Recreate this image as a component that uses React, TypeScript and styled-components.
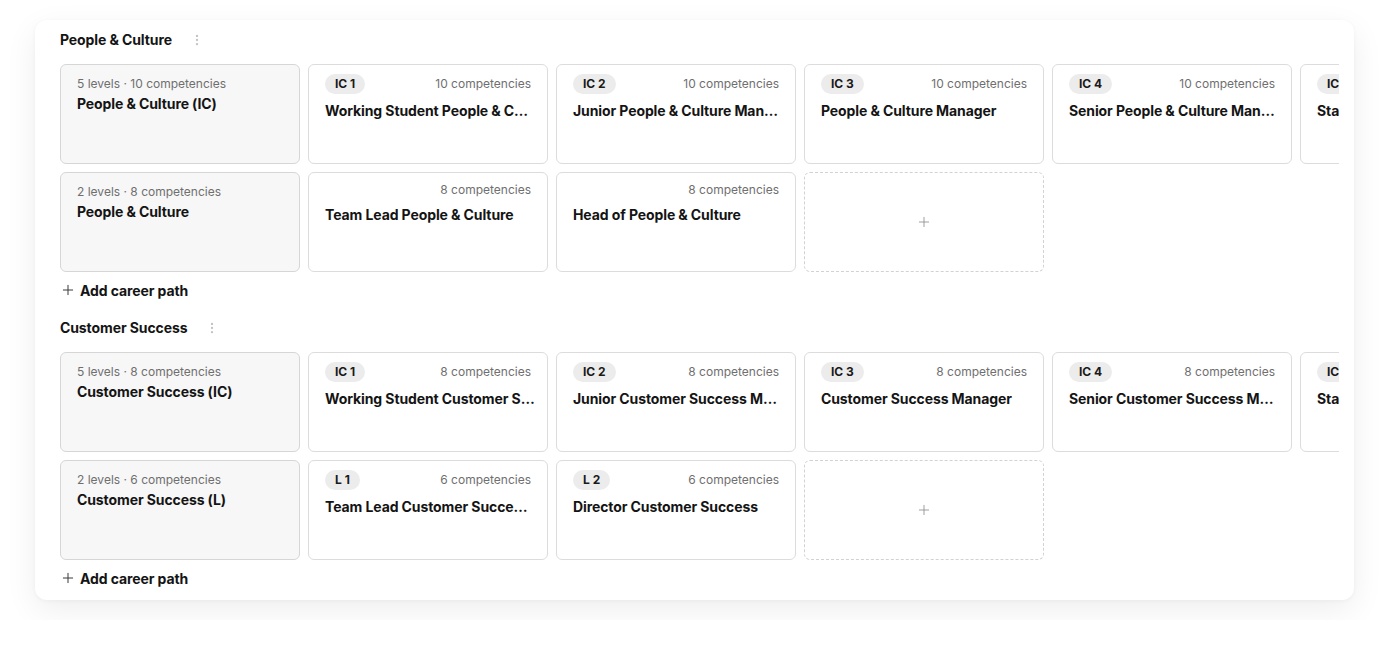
import React from 'react';
import styled, { createGlobalStyle } from 'styled-components';
import { EllipsisVertical, Plus } from 'lucide-react';

const GlobalStyle = createGlobalStyle`
  html, body { margin: 0; padding: 0; background: #fff; }
  body {
    font-family: Inter, "Noto Sans", sans-serif;
    color: #161616;
    -webkit-font-smoothing: antialiased;
  }
  * { box-sizing: border-box; }
`;

const Panel = styled.div`
  margin: 20px 35px;
  background: #fff;
  border-radius: 12px;
  box-shadow: 0 10px 32px rgba(0, 0, 0, 0.07), 0 1px 4px rgba(0, 0, 0, 0.04);
  padding: 0 15px 4px 25px;
`;

const Section = styled.section`
  display: flex;
  flex-direction: column;
`;

const SectionHeader = styled.div`
  height: 40px;
  display: flex;
  align-items: center;
`;

const SectionTitle = styled.h2`
  margin: 0;
  font-size: 14px;
  line-height: 20px;
  font-weight: 700;
  letter-spacing: -0.1px;
  color: #141414;
`;

const MenuButton = styled.span`
  display: inline-flex;
  margin-left: 18px;
  color: #c4c4c4;
`;

const Board = styled.div`
  margin-top: 4px;
  display: flex;
  flex-direction: column;
  gap: 8px;
  overflow: hidden;
`;

const Row = styled.div`
  display: flex;
  gap: 8px;
`;

const CardBase = styled.div`
  flex: 0 0 240px;
  height: 100px;
  border-radius: 6px;
  border: 1px solid #dcdcdc;
  display: flex;
  flex-direction: column;
  min-width: 0;
`;

const PathCard = styled(CardBase)`
  background: #f7f7f7;
  border-color: #d6d6d6;
  padding: 11px 16px;
`;

const RoleCard = styled(CardBase)`
  background: #fff;
  padding: 9px 16px;
`;

const AddCard = styled(CardBase)`
  border: 1px dashed #d2d2d2;
  background: #fff;
  align-items: center;
  justify-content: center;
  color: #8c8c8c;
`;

const Meta = styled.div`
  font-size: 12px;
  line-height: 16px;
  color: #6f6f6f;
  white-space: nowrap;
`;

const CardHeader = styled.div`
  display: flex;
  align-items: center;
  justify-content: space-between;
  gap: 8px;
`;

const Badge = styled.span`
  height: 20px;
  padding: 0 10px;
  border-radius: 10px;
  background: #ececec;
  font-size: 12px;
  line-height: 20px;
  font-weight: 700;
  color: #1a1a1a;
  white-space: nowrap;
`;

const Count = styled(Meta)`
  margin-left: auto;
`;

const CardTitle = styled.div<{ $gap: number }>`
  margin-top: ${(p) => p.$gap}px;
  margin-right: -4px;
  font-size: 14px;
  line-height: 20px;
  font-weight: 700;
  letter-spacing: -0.1px;
  color: #141414;
  white-space: nowrap;
  overflow: hidden;
  text-overflow: ellipsis;
`;

const AddPath = styled.button`
  height: 36px;
  display: flex;
  align-items: center;
  gap: 4px;
  padding: 0;
  border: 0;
  background: none;
  font-family: inherit;
  font-size: 14px;
  font-weight: 700;
  letter-spacing: -0.1px;
  color: #141414;
  cursor: pointer;
  align-self: flex-start;
  svg { color: #3a3a3a; }
`;

type Role = { level?: string; count: number; title: string };
type PathRow = { levels: number; count: number; name: string; roles: Role[]; add?: boolean };
type SectionData = { name: string; rows: PathRow[] };

const data: SectionData[] = [
  {
    name: 'People & Culture',
    rows: [
      {
        levels: 5,
        count: 10,
        name: 'People & Culture (IC)',
        roles: [
          { level: 'IC 1', count: 10, title: 'Working Student People & Culture' },
          { level: 'IC 2', count: 10, title: 'Junior People & Culture Manager' },
          { level: 'IC 3', count: 10, title: 'People & Culture Manager' },
          { level: 'IC 4', count: 10, title: 'Senior People & Culture Manager' },
          { level: 'IC 5', count: 10, title: 'Staff People & Culture Manager' },
        ],
      },
      {
        levels: 2,
        count: 8,
        name: 'People & Culture',
        add: true,
        roles: [
          { count: 8, title: 'Team Lead People & Culture' },
          { count: 8, title: 'Head of People & Culture' },
        ],
      },
    ],
  },
  {
    name: 'Customer Success',
    rows: [
      {
        levels: 5,
        count: 8,
        name: 'Customer Success (IC)',
        roles: [
          { level: 'IC 1', count: 8, title: 'Working Student Customer Success' },
          { level: 'IC 2', count: 8, title: 'Junior Customer Success Manager' },
          { level: 'IC 3', count: 8, title: 'Customer Success Manager' },
          { level: 'IC 4', count: 8, title: 'Senior Customer Success Manager' },
          { level: 'IC 5', count: 8, title: 'Staff Customer Success Manager' },
        ],
      },
      {
        levels: 2,
        count: 6,
        name: 'Customer Success (L)',
        add: true,
        roles: [
          { level: 'L 1', count: 6, title: 'Team Lead Customer Success Manager' },
          { level: 'L 2', count: 6, title: 'Director Customer Success' },
        ],
      },
    ],
  },
];

export default function App() {
  return (
    <>
      <GlobalStyle />
      <Panel>
        {data.map((section) => (
          <Section key={section.name}>
            <SectionHeader>
              <SectionTitle>{section.name}</SectionTitle>
              <MenuButton>
                <EllipsisVertical size={14} strokeWidth={2} />
              </MenuButton>
            </SectionHeader>
            <Board>
              {section.rows.map((row) => (
                <Row key={row.name}>
                  <PathCard>
                    <Meta>
                      {row.levels} levels · {row.count} competencies
                    </Meta>
                    <CardTitle $gap={2}>{row.name}</CardTitle>
                  </PathCard>
                  {row.roles.map((role) => (
                    <RoleCard key={role.title}>
                      <CardHeader>
                        {role.level && <Badge>{role.level}</Badge>}
                        <Count>{role.count} competencies</Count>
                      </CardHeader>
                      <CardTitle $gap={7}>{role.title}</CardTitle>
                    </RoleCard>
                  ))}
                  {row.add && (
                    <AddCard>
                      <Plus size={16} strokeWidth={1.25} />
                    </AddCard>
                  )}
                </Row>
              ))}
            </Board>
            <AddPath>
              <Plus size={16} strokeWidth={1.5} />
              Add career path
            </AddPath>
          </Section>
        ))}
      </Panel>
    </>
  );
}
